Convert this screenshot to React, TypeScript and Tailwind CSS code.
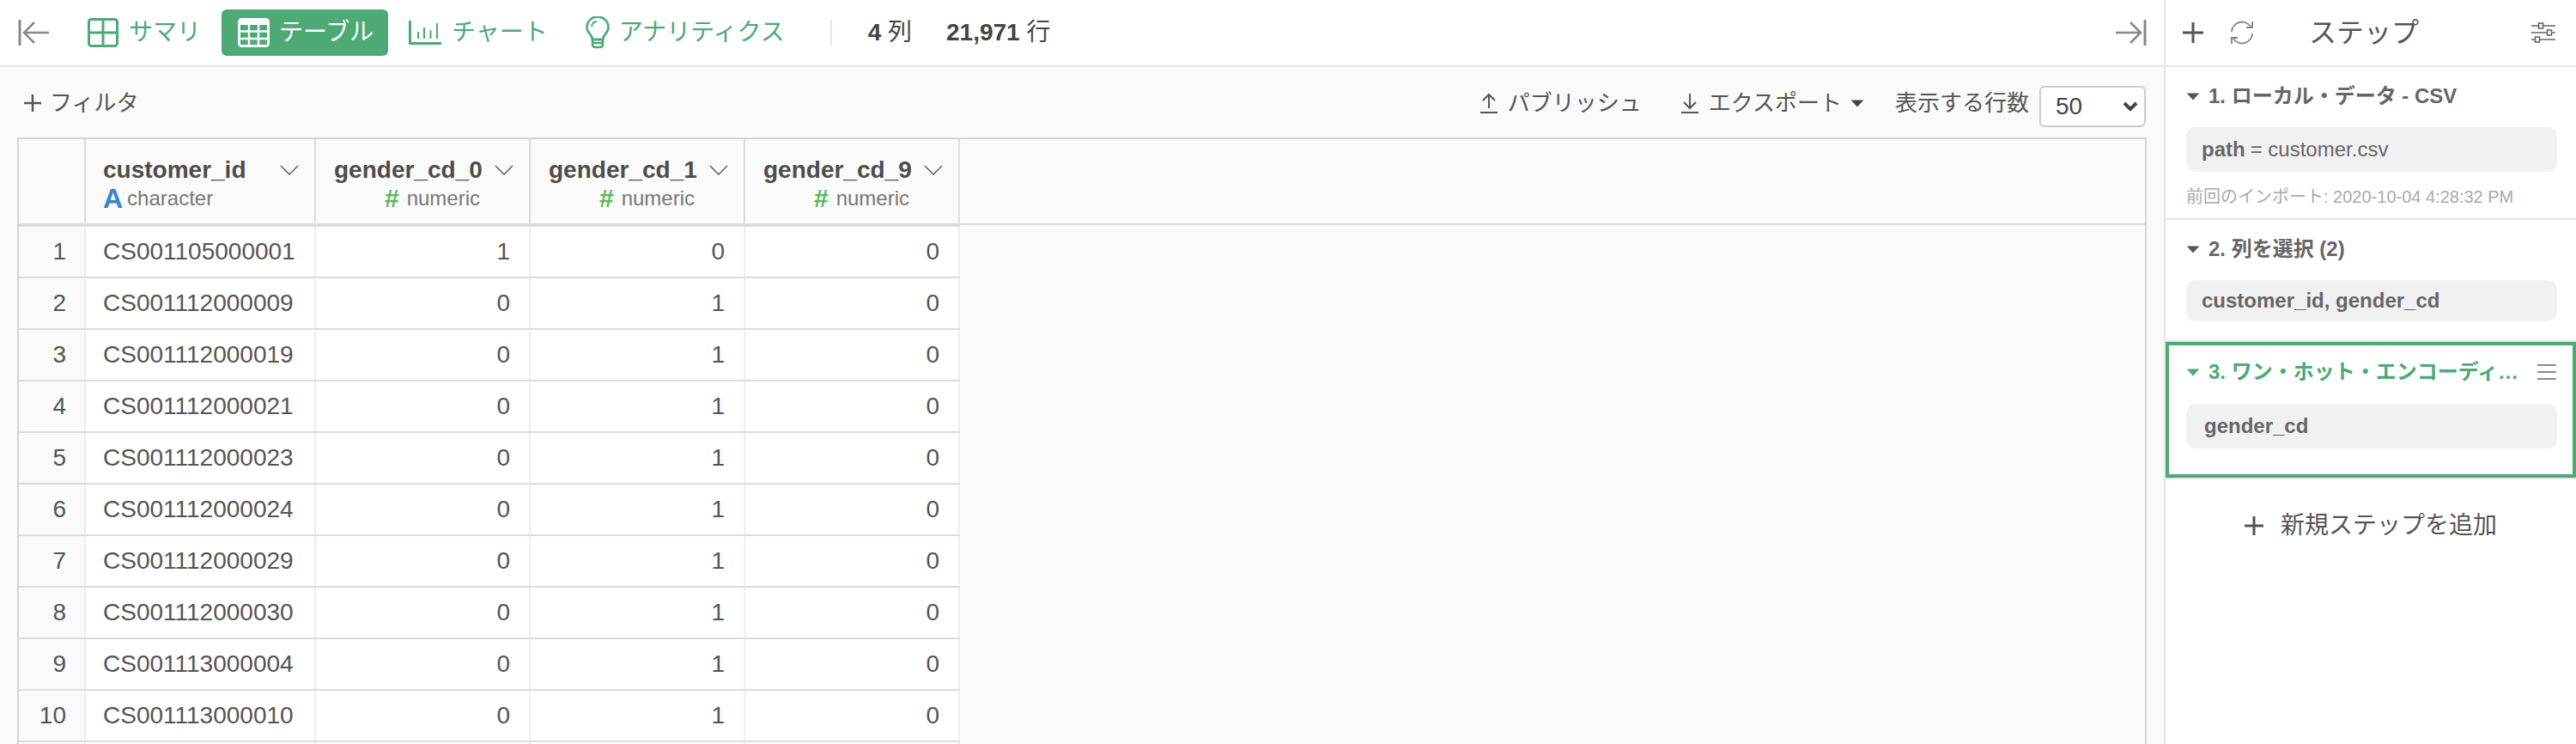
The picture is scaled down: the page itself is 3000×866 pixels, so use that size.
import { ReactNode } from 'react';

const rows = [
  ['CS001105000001', 1, 0, 0],
  ['CS001112000009', 0, 1, 0],
  ['CS001112000019', 0, 1, 0],
  ['CS001112000021', 0, 1, 0],
  ['CS001112000023', 0, 1, 0],
  ['CS001112000024', 0, 1, 0],
  ['CS001112000029', 0, 1, 0],
  ['CS001112000030', 0, 1, 0],
  ['CS001113000004', 0, 1, 0],
  ['CS001113000010', 0, 1, 0],
];

function Caret({ className }: { className: string }) {
  return (
    <svg width="16" height="9" viewBox="0 0 14 8" className={`shrink-0 ${className}`}>
      <path d="M0.5 0.5H13.5L7 7.5Z" fill="currentColor" />
    </svg>
  );
}

function Chevron() {
  return (
    <svg width="22" height="12" viewBox="0 0 22 12" className="text-[#555]">
      <path d="M1 1L11 11L21 1" fill="none" stroke="currentColor" strokeWidth="1.4" />
    </svg>
  );
}

function HeaderCell({ name, width }: { name: string; width: string }) {
  return (
    <div className={`${width} h-[102px] shrink-0 border-r-2 border-b-4 border-[#ddd] pl-[21px] pr-[18px] pt-[20px]`}>
      <div className="flex items-center justify-between h-[32px]">
        <span className="text-[28px] font-bold text-[#4d4d4d] leading-none">{name}</span>
        <Chevron />
      </div>
      <div className="flex items-center justify-end pr-[39px] mt-[2px] h-[30px]">
        <span className="text-[30px] font-bold text-[#5cb85c] leading-none mr-[9px]">#</span>
        <span className="text-[24px] text-[#777] leading-none">numeric</span>
      </div>
    </div>
  );
}

function Box({ children, className = '' }: { children: ReactNode; className?: string }) {
  return (
    <div className={`w-[432px] rounded-[10px] bg-[#f1f1f1] flex items-center text-[24px] text-[#666] ${className}`}>
      {children}
    </div>
  );
}

export default function App() {
  return (
    <div className="w-[3000px] h-[866px] overflow-hidden flex bg-white font-['Liberation_Sans','Noto_Sans_CJK_JP',sans-serif]">
      <div className="w-[2522px] shrink-0 border-r-2 border-[#e6e6e6] flex flex-col">
        <div className="h-[78px] shrink-0 border-b-2 border-[#e8e8e8] flex items-center text-[28px] text-[#4da975]">
          <svg width="38" height="32" viewBox="0 0 38 32" className="ml-[20px] text-[#888]" fill="none" stroke="currentColor">
            <path d="M3 1V31" strokeWidth="3" />
            <path d="M37 16H8M20 4L8 16L20 28" strokeWidth="2.5" />
          </svg>
          <svg width="36" height="34" viewBox="0 0 36 34" className="ml-[44px]" fill="none" stroke="currentColor" strokeWidth="3">
            <rect x="1.5" y="1.5" width="33" height="31" rx="3" />
            <path d="M18 2V32M2 17H34" />
          </svg>
          <span className="ml-[12px] w-[92px]">サマリ</span>
          <div className="ml-[16px] w-[194px] h-[54px] rounded-[6px] bg-[#4da975] text-white flex items-center">
            <svg width="37" height="34" viewBox="0 0 37 34" className="ml-[19px]" fill="none" stroke="currentColor">
              <rect x="1.5" y="1.5" width="34" height="31" rx="3" strokeWidth="3" />
              <path d="M2 5.5H35" strokeWidth="5" />
              <path d="M13 8V32M24 8V32M2 15.5H35M2 24H35" strokeWidth="2.4" />
            </svg>
            <span className="ml-[11px]">テーブル</span>
          </div>
          <svg width="38" height="28" viewBox="0 0 38 28" className="ml-[24px]" fill="none" stroke="currentColor">
            <path d="M1.5 0V26.5H38" strokeWidth="3" />
            <path d="M11 13V21M18 8V21M25.5 11V21M33 3V21" strokeWidth="2" />
          </svg>
          <span className="ml-[12px]">チャート</span>
          <svg width="28" height="38" viewBox="0 0 28 38" className="ml-[44px]" fill="none" stroke="currentColor" strokeWidth="2.6">
            <path d="M8 27C8 21 1.5 20 1.5 13A12.5 12.5 0 0 1 26.5 13C26.5 20 20 21 20 27Z" />
            <path d="M8 27H20V33A3 3 0 0 1 17 36H11A3 3 0 0 1 8 33ZM8 31H20" />
            <path d="M7 12A7 7 0 0 1 13 6" strokeWidth="2" />
          </svg>
          <span className="ml-[11px]">アナリティクス</span>
          <div className="ml-[53px] w-[2px] h-[30px] bg-[#e8e8e8]" />
          <span className="ml-[42px] text-[#444]">
            <b>4</b> 列
          </span>
          <span className="ml-[40px] text-[#444]">
            <b>21,971</b> 行
          </span>
          <svg width="36" height="32" viewBox="0 0 36 32" className="ml-auto mr-[20px] text-[#888]" fill="none" stroke="currentColor">
            <path d="M34 1V31" strokeWidth="3" />
            <path d="M0 16H29M17 4L29 16L17 28" strokeWidth="2.5" />
          </svg>
        </div>

        <div className="flex-1 min-h-0 bg-[#fafafa] flex flex-col">
          <div className="h-[82px] shrink-0 pt-[2px] flex items-center text-[26px] text-[#555]">
            <svg width="22" height="22" viewBox="0 0 22 22" className="ml-[27px]" fill="none" stroke="currentColor" strokeWidth="2.5">
              <path d="M11 1V21M1 11H21" />
            </svg>
            <span className="ml-[9px]">フィルタ</span>
            <svg width="20" height="24" viewBox="0 0 20 24" className="ml-auto" fill="none" stroke="currentColor" strokeWidth="2">
              <path d="M10 18V2M3 9L10 2L17 9M0 23H20" />
            </svg>
            <span className="ml-[12px]">パブリッシュ</span>
            <svg width="20" height="24" viewBox="0 0 20 24" className="ml-[46px]" fill="none" stroke="currentColor" strokeWidth="2">
              <path d="M10 1V18M3 11L10 18L17 11M0 23H20" />
            </svg>
            <span className="ml-[12px]">エクスポート</span>
            <Caret className="ml-[10px] text-[#444]" />
            <span className="ml-[36px]">表示する行数</span>
            <div className="ml-[12px] mr-[21px] mt-[8px] w-[124px] h-[48px] bg-white border-2 border-[#ccc] rounded-[6px] flex items-center justify-between pl-[17px] pr-[7px] text-[28px] text-[#444]">
              <span>50</span>
              <svg width="18" height="12" viewBox="0 0 18 12" fill="none" stroke="#444" strokeWidth="4">
                <path d="M2 2L9 9L16 2" />
              </svg>
            </div>
          </div>

          <div className="flex-1 ml-[20px] mr-[20px] border-x-2 border-t-2 border-[#d6d6d6] overflow-hidden">
            <div className="flex">
              <div className="w-[78px] h-[102px] shrink-0 border-r-2 border-b-4 border-[#ddd]" />
              <div className="w-[268px] h-[102px] shrink-0 border-r-2 border-b-4 border-[#ddd] pl-[20px] pr-[18px] pt-[20px]">
                <div className="flex items-center justify-between h-[32px]">
                  <span className="text-[28px] font-bold text-[#4d4d4d] leading-none">customer_id</span>
                  <Chevron />
                </div>
                <div className="flex items-center mt-[2px] h-[30px]">
                  <span className="text-[32px] font-bold text-[#3a83d0] leading-none mr-[5px]">A</span>
                  <span className="text-[24px] text-[#777] leading-none">character</span>
                </div>
              </div>
              <HeaderCell name="gender_cd_0" width="w-[250px]" />
              <HeaderCell name="gender_cd_1" width="w-[250px]" />
              <HeaderCell name="gender_cd_9" width="w-[250px]" />
              <div className="flex-1 h-[100px] border-b-2 border-[#ddd]" />
            </div>
            {rows.map((row, i) => (
              <div key={i} className="flex w-[1096px] h-[60px] border-b-2 border-[#ddd] text-[28px] text-[#555] bg-white">
                <div className="w-[78px] shrink-0 bg-[#fafafa] border-r-2 border-[#eee] flex items-center justify-end pr-[21px]">{i + 1}</div>
                <div className="w-[268px] shrink-0 border-r-2 border-[#eee] flex items-center pl-[20px]">{row[0]}</div>
                {row.slice(1).map((v, j) => (
                  <div key={j} className="w-[250px] shrink-0 border-r-2 border-[#eee] flex items-center justify-end pr-[22px]">{v}</div>
                ))}
              </div>
            ))}
            <div className="flex w-[1096px] h-[60px] bg-white">
              <div className="w-[78px] shrink-0 bg-[#fafafa] border-r-2 border-[#eee]" />
              <div className="w-[268px] shrink-0 border-r-2 border-[#eee]" />
              <div className="w-[250px] shrink-0 border-r-2 border-[#eee]" />
              <div className="w-[250px] shrink-0 border-r-2 border-[#eee]" />
              <div className="w-[250px] shrink-0 border-r-2 border-[#eee]" />
            </div>
          </div>
        </div>
      </div>

      <div className="flex-1 min-w-0 flex flex-col">
        <div className="h-[78px] shrink-0 border-b-2 border-[#e8e8e8] flex items-center text-[#555]">
          <svg width="24" height="24" viewBox="0 0 24 24" className="ml-[20px]" fill="none" stroke="currentColor" strokeWidth="3">
            <path d="M12 0V24M0 12H24" />
          </svg>
          <svg width="28" height="28" viewBox="0 0 28 28" className="ml-[31px] text-[#888]" fill="none" stroke="currentColor" strokeWidth="2">
            <path d="M2 13A12 12 0 0 1 24 7M26 15A12 12 0 0 1 4 21" />
            <path d="M26 1V8H19M2 27V20H9" />
          </svg>
          <span className="ml-[64px] text-[32px] text-[#555]">ステップ</span>
          <svg width="28" height="24" viewBox="0 0 28 24" className="ml-auto mr-[24px] text-[#666]" fill="none" stroke="currentColor" strokeWidth="1.6">
            <path d="M0 4H8M14 4H28M0 12H18M24 12H28M0 20H4M10 20H28" />
            <rect x="8.5" y="1" width="5" height="6" />
            <rect x="18.5" y="9" width="5" height="6" />
            <rect x="4.5" y="17" width="5" height="6" />
          </svg>
        </div>

        <div className="h-[178px] shrink-0 border-b-2 border-[#e8e8e8] pl-[24px]">
          <div className="flex items-center h-[34px] mt-[17px] text-[24px] font-bold text-[#666]">
            <Caret className="text-[#555]" />
            <span className="ml-[10px]">1. ローカル・データ - CSV</span>
          </div>
          <Box className="mt-[19px] h-[52px] pl-[18px]">
            <b>path</b>
            <span className="ml-[6px]">= customer.csv</span>
          </Box>
          <div className="mt-[15px] text-[20px] leading-[28px] text-[#aaa]">前回のインポート: 2020-10-04 4:28:32 PM</div>
        </div>

        <div className="h-[142px] shrink-0 border-b-2 border-[#e8e8e8] pl-[24px]">
          <div className="flex items-center h-[34px] mt-[17px] text-[24px] font-bold text-[#666]">
            <Caret className="text-[#555]" />
            <span className="ml-[10px]">2. 列を選択 (2)</span>
          </div>
          <Box className="mt-[19px] h-[48px] pl-[18px] font-bold">customer_id, gender_cd</Box>
        </div>

        <div className="h-[158px] shrink-0 border-4 border-[#4da975] pl-[20px]">
          <div className="flex items-center h-[34px] mt-[14px] text-[24px] font-bold text-[#4da975]">
            <Caret className="" />
            <span className="ml-[10px] w-[364px] whitespace-nowrap">3. ワン・ホット・エンコーディ…</span>
            <svg width="22" height="18" viewBox="0 0 22 18" className="ml-[19px] shrink-0 text-[#666]" fill="none" stroke="currentColor" strokeWidth="1.6">
              <path d="M0 1H22M0 9H22M0 17H22" />
            </svg>
          </div>
          <Box className="mt-[20px] h-[52px] pl-[21px] font-bold">gender_cd</Box>
        </div>

        <div className="h-[2px] shrink-0 bg-[#e8e8e8]" />

        <div className="flex items-center mt-[33px] ml-[92px] text-[28px] text-[#555]">
          <svg width="22" height="22" viewBox="0 0 22 22" fill="none" stroke="currentColor" strokeWidth="3">
            <path d="M11 0V22M0 11H22" />
          </svg>
          <span className="ml-[20px]">新規ステップを追加</span>
        </div>
      </div>
    </div>
  );
}
